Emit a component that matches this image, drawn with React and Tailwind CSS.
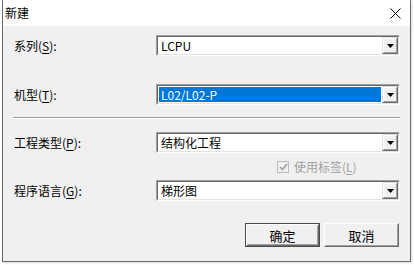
import React from 'react';

const font = { fontFamily: '"Microsoft YaHei UI", "Noto Sans CJK SC", "Noto Sans", sans-serif' };

function Label({ text, k }) {
  return (
    <div className="w-[142px] shrink-0 text-[12px] text-black leading-none">
      {text}(<span className="underline underline-offset-2">{k}</span>):
    </div>
  );
}

function Combo({ value, selected }) {
  return (
    <div className="w-[244px] h-[21px] flex border border-t-[#a0a0a0] border-l-[#a0a0a0] border-b-white border-r-white">
      <div className="flex-1 flex border border-t-[#696969] border-l-[#696969] border-b-[#e3e3e3] border-r-[#e3e3e3] bg-white">
        <div className="flex-1 flex items-center pl-[1px] pr-[1px] py-[1px]">
          <div
            className={`h-full flex items-center pl-[2px] text-[12px] leading-none w-full ${
              selected ? 'bg-[#0078d7] text-white' : 'text-black'
            }`}
          >
            {value}
          </div>
        </div>
        <div className="w-[16px] h-full flex border border-t-[#e3e3e3] border-l-[#e3e3e3] border-b-[#696969] border-r-[#696969]">
          <div className="flex-1 flex items-center justify-center bg-[#f0f0f0] border border-t-white border-l-white border-b-[#a0a0a0] border-r-[#a0a0a0]">
            <svg width="7" height="4" viewBox="0 0 7 4">
              <path d="M0 0h7L3.5 4z" fill="#000" />
            </svg>
          </div>
        </div>
      </div>
    </div>
  );
}

function Btn({ children, isDefault }) {
  return (
    <div
      className={`w-[75px] h-[24px] flex ${
        isDefault ? 'border border-[#4a4a4a]' : ''
      }`}
    >
      <div className="flex-1 flex border border-t-white border-l-white border-b-[#696969] border-r-[#696969]">
        <div className="flex-1 flex items-center justify-center bg-[#f0f0f0] border border-t-[#f0f0f0] border-l-[#f0f0f0] border-b-[#a0a0a0] border-r-[#a0a0a0] text-[13px] text-black leading-none">
          {children}
        </div>
      </div>
    </div>
  );
}

export default function App() {
  return (
    <div className="w-[414px] h-[265px] bg-white" style={font}>
      <div className="ml-[2px] w-[409px] h-[262px] flex flex-col border border-[#6a6a6a] border-t-0 shadow-[1px_1px_2px_rgba(0,0,0,0.15)]">
        <div className="h-[26px] bg-white flex items-center justify-between pl-[2px] pr-[9px]">
          <span className="text-[12px] text-black leading-none">新建</span>
          <svg width="11" height="11" viewBox="0 0 11 11">
            <path d="M0.5 0.5L10.5 10.5M10.5 0.5L0.5 10.5" stroke="#000" strokeWidth="1" />
          </svg>
        </div>
        <div className="flex-1 bg-[#f0f0f0] pl-[11px] pr-[10px] pt-[9px] flex flex-col">
          <div className="flex items-center">
            <Label text="系列" k="S" />
            <Combo value="LCPU" />
          </div>
          <div className="flex items-center mt-[28px]">
            <Label text="机型" k="T" />
            <Combo value="L02/L02-P" selected />
          </div>
          <div className="mt-[12px] ml-[-1px] h-[2px] border-t border-t-[#a0a0a0] border-b border-b-white" />
          <div className="flex items-center mt-[13px]">
            <Label text="工程类型" k="P" />
            <Combo value="结构化工程" />
          </div>
          <div className="h-[27px] flex items-center pl-[263px] gap-[5px]">
            <div className="w-[12px] h-[12px] border border-[#bcbcbc] bg-[#f0f0f0] flex items-center justify-center">
              <svg width="9" height="8" viewBox="0 0 9 8">
                <path d="M1 4l2.5 2.5L8 1" stroke="#a0a0a0" strokeWidth="1.6" fill="none" />
              </svg>
            </div>
            <span className="text-[12px] text-[#a0a0a0] leading-none">
              使用标签(<span className="underline underline-offset-2">L</span>)
            </span>
          </div>
          <div className="flex items-center">
            <Label text="程序语言" k="G" />
            <Combo value="梯形图" />
          </div>
          <div className="flex justify-end gap-[4px] mt-[22px] pr-[1px]">
            <Btn isDefault>确定</Btn>
            <Btn>取消</Btn>
          </div>
        </div>
      </div>
    </div>
  );
}
